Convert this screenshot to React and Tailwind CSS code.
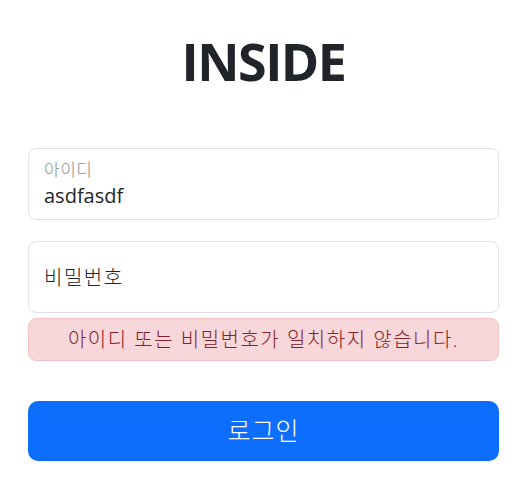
import React from "react";

export default function App() {
  const font = { fontFamily: '"Open Sans", "Noto Sans CJK KR", sans-serif' };
  return (
    <div className="w-[527px] h-[494px] bg-white px-[28px] pt-[29px] text-[#212529]" style={font}>
      <h1 className="text-center font-bold text-[52px] leading-[64px] tracking-[-1.5px] text-[#212529]">INSIDE</h1>
      <div className="mt-[55px] h-[72px] rounded-[8px] border border-[#dee2e6] px-[15px] pt-[10px] flex flex-col">
        <div className="text-[17px] leading-[21px] tracking-[0.5px] font-light text-[#8c8e90]">아이디</div>
        <div className="mt-[1px] text-[20px] leading-[30px]">asdfasdf</div>
      </div>
      <div className="mt-[21px] h-[72px] rounded-[8px] border border-[#dee2e6] px-[15px] flex items-center">
        <div className="text-[20px] leading-[30px] mt-[1px] tracking-[1.5px] font-light">비밀번호</div>
      </div>
      <div className="mt-[5px] h-[43px] rounded-[8px] border border-[#f5c2c7] bg-[#f8d7da] flex items-center justify-center text-[20px] tracking-[1.5px] font-light text-[#842029]">
        아이디 또는 비밀번호가 일치하지 않습니다.
      </div>
      <button className="mt-[40px] w-full h-[60px] rounded-[10px] bg-[#0d6efd] text-white text-[25px] tracking-[1px] font-light flex items-center justify-center">
        로그인
      </button>
    </div>
  );
}
